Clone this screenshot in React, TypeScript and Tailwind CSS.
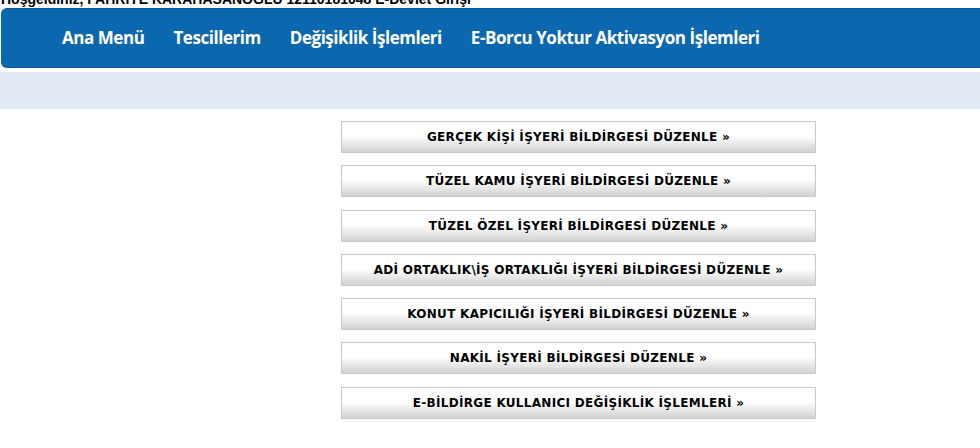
const menu = ["Ana Menü", "Tescillerim", "Değişiklik İşlemleri", "E-Borcu Yoktur Aktivasyon İşlemleri"];

const actions = [
  "GERÇEK KİŞİ İŞYERİ BİLDİRGESİ DÜZENLE »",
  "TÜZEL KAMU İŞYERİ BİLDİRGESİ DÜZENLE »",
  "TÜZEL ÖZEL İŞYERİ BİLDİRGESİ DÜZENLE »",
  "ADİ ORTAKLIK\\İŞ ORTAKLIĞI İŞYERİ BİLDİRGESİ DÜZENLE »",
  "KONUT KAPICILIĞI İŞYERİ BİLDİRGESİ DÜZENLE »",
  "NAKİL İŞYERİ BİLDİRGESİ DÜZENLE »",
  "E-BİLDİRGE KULLANICI DEĞİŞİKLİK İŞLEMLERİ »",
];

export default function App() {
  return (
    <div className="w-[980px] h-[448px] overflow-hidden bg-white">
      {/* karşılama satırı */}
      <div className="h-[8px] overflow-hidden">
        <p className="mt-[-9.5px] pl-[1px] text-[14px] leading-[16px] font-bold text-black font-['Liberation_Sans',Arial,sans-serif] whitespace-nowrap">
          Hoşgeldiniz, FAHRİYE KARAHASANOĞLU 12110181048 E-Devlet Girişi
        </p>
      </div>

      {/* MENÜ */}
      <nav className="ml-[1px] mr-[-10px] h-[60px] flex items-center pl-[61px] gap-[29px] bg-[#0b67ae] border-y border-[#0a5999] rounded-l-[6px]">
        {menu.map((item) => (
          <a
            key={item}
            className="text-white text-[17px] font-bold tracking-[-0.45px] font-['Open_Sans',sans-serif] whitespace-nowrap"
          >
            {item}
          </a>
        ))}
      </nav>

      <div className="mt-[4px] h-[37px] bg-[#e1eaf3]" />

      {/* İŞLEMLER */}
      <div className="mt-[12px] ml-[341px] w-[475px] flex flex-col gap-[12.3px]">
        {actions.map((label) => (
          <button
            key={label}
            className="h-[32px] w-full border border-[#c9c9c9] bg-gradient-to-b from-white from-45% to-[#d2d2d2] text-[12px] font-bold tracking-[0.3px] text-black font-['DejaVu_Sans',Verdana,sans-serif] flex items-center justify-center"
          >
            {label}
          </button>
        ))}
      </div>
    </div>
  );
}
